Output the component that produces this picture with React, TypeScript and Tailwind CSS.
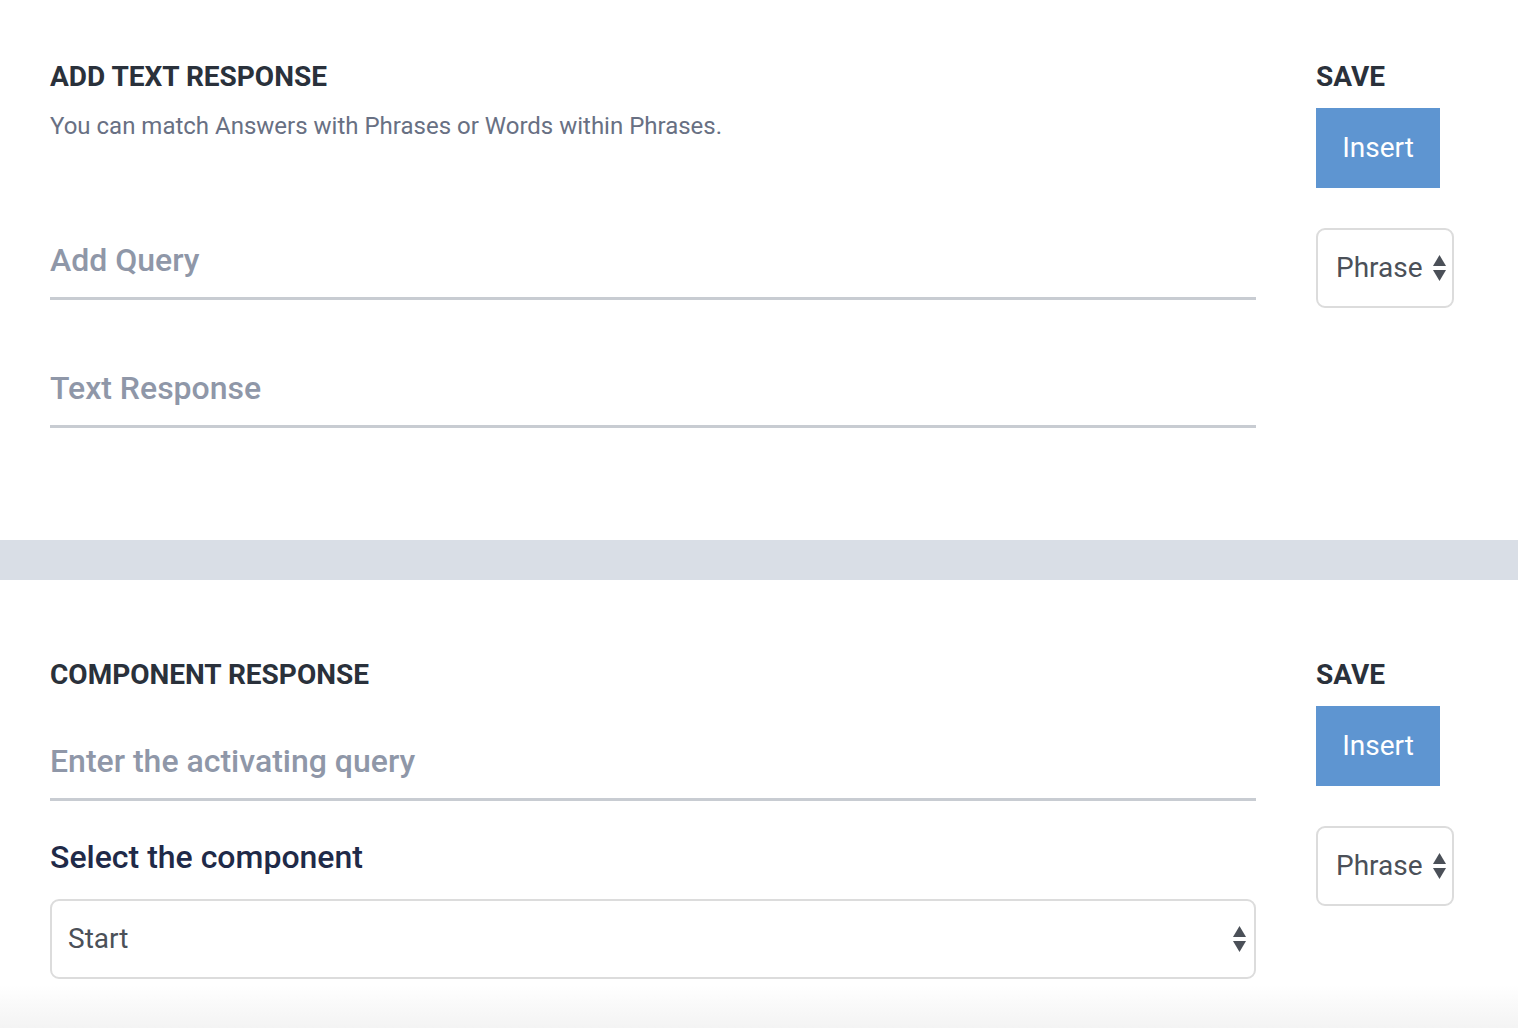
import React from 'react'

function Arrows() {
  return (
    <svg width="13" height="26" viewBox="0 0 13 26" className="shrink-0">
      <path d="M6.5 0 L13 11 L0 11 Z" fill="#4b5058" />
      <path d="M0 15 L13 15 L6.5 26 Z" fill="#4b5058" />
    </svg>
  )
}

function PhraseSelect() {
  return (
    <div className="w-[138px] h-[80px] border-2 border-[#dcdcdc] rounded-[9px] flex items-center pl-[18px] gap-[10px] bg-white">
      <span className="text-[28px] leading-[32px] text-[#4b5058]">Phrase</span>
      <Arrows />
    </div>
  )
}

function SaveColumn() {
  return (
    <div className="flex flex-col items-start">
      <div className="text-[28px] leading-[32px] font-bold text-[#2a313b]">SAVE</div>
      <button className="mt-[15px] w-[124px] h-[80px] bg-[#5e95d1] text-white text-[28px] leading-[32px]">
        Insert
      </button>
      <div className="mt-[40px]">
        <PhraseSelect />
      </div>
    </div>
  )
}

function UnderlineInput({ placeholder, className }: { placeholder: string; className?: string }) {
  return (
    <div className={`pb-[17px] border-b-[3px] border-[#c8ccd2] ${className ?? ''}`}>
      <input
        placeholder={placeholder}
        className="w-full h-[40px] leading-[40px] text-[32px] font-medium text-[#4b5058] placeholder:text-[#8f97a8] outline-none bg-transparent"
      />
    </div>
  )
}

export default function App() {
  return (
    <div className="min-h-screen bg-white font-['Roboto',sans-serif] flex flex-col">
      {/* Add text response */}
      <section className="flex px-[50px] pt-[61px] pb-[112px]">
        <div className="w-[1206px] flex flex-col">
          <h2 className="text-[28px] leading-[32px] font-bold text-[#2a313b]">ADD TEXT RESPONSE</h2>
          <p className="mt-[19px] text-[24px] leading-[28px] text-[#687083]">
            You can match Answers with Phrases or Words within Phrases.
          </p>
          <UnderlineInput placeholder="Add Query" className="mt-[100px]" />
          <UnderlineInput placeholder="Text Response" className="mt-[68px]" />
        </div>
        <div className="ml-[60px]">
          <SaveColumn />
        </div>
      </section>

      <div className="h-[40px] bg-[#d9dee6]" />

      {/* Component response */}
      <section className="flex px-[50px] pt-[79px] pb-[6px]">
        <div className="w-[1206px] flex flex-col">
          <h2 className="text-[28px] leading-[32px] font-bold text-[#2a313b]">COMPONENT RESPONSE</h2>
          <UnderlineInput placeholder="Enter the activating query" className="mt-[50px]" />
          <label className="mt-[38px] text-[32px] leading-[36px] font-medium text-[#1f2a48]">
            Select the component
          </label>
          <div className="mt-[24px] h-[80px] border-2 border-[#dcdcdc] rounded-[9px] flex items-center justify-between pl-[16px] pr-[8px]">
            <span className="text-[28px] leading-[32px] text-[#4b5058]">Start</span>
            <Arrows />
          </div>
        </div>
        <div className="ml-[60px]">
          <SaveColumn />
        </div>
      </section>
      <div className="flex-1 min-h-[45px] bg-gradient-to-b from-white to-[#f3f3f3]" />
    </div>
  )
}
